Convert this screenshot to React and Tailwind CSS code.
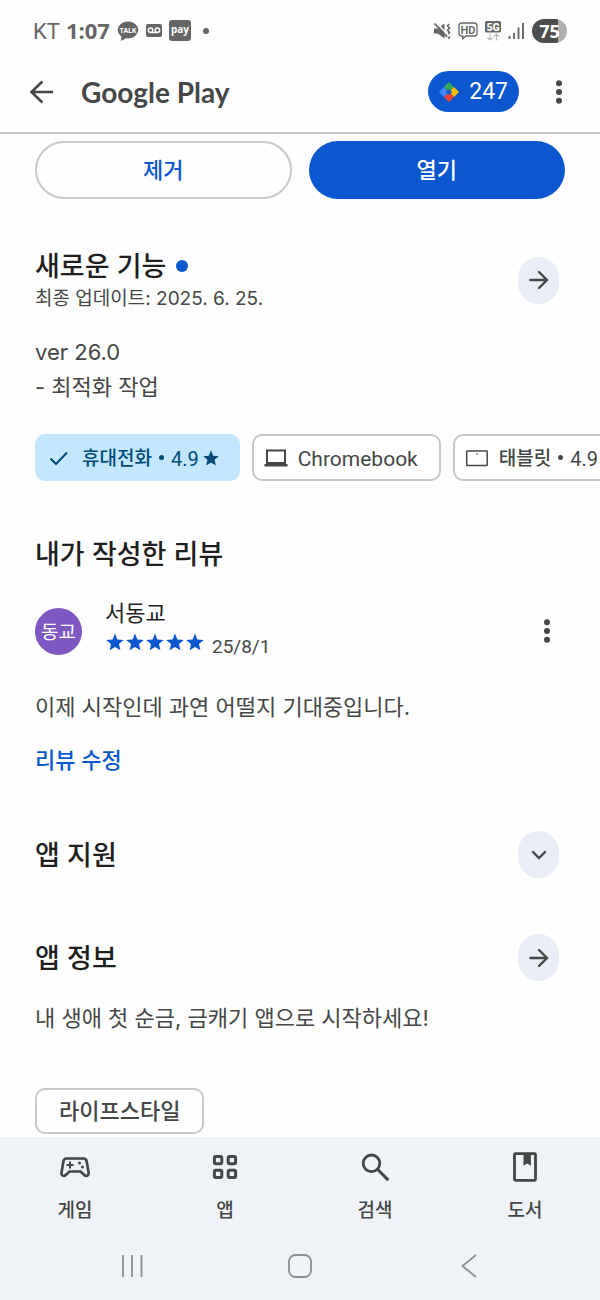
import React from "react";

const FONT = "font-['Inter','Noto_Sans_CJK_KR',sans-serif]";
const FONT_NARROW = "font-['Roboto','Noto_Sans_CJK_KR',sans-serif]";

const STAR_PATH =
  "M12 1.8l2.9 7.1 7.6.6-5.8 4.9 1.8 7.5L12 17.9l-6.5 4 1.8-7.5L1.5 9.5l7.6-.6z";

const Star = ({ className }) => (
  <svg viewBox="0 0 24 24" className={className} fill="currentColor" aria-hidden="true">
    <path d={STAR_PATH} />
  </svg>
);

const MoreIcon = () => (
  <svg viewBox="0 0 8 24" className="h-6 w-2" fill="#444746" aria-hidden="true">
    <circle cx="4" cy="3.2" r="3" />
    <circle cx="4" cy="12" r="3" />
    <circle cx="4" cy="20.8" r="3" />
  </svg>
);

const StatusBar = () => (
  <div className={`flex h-[61px] items-center justify-between pl-[33px] pr-[33px] text-[#666] ${FONT_NARROW}`}>
    <div className="flex items-center">
      <span className="pt-[2px] text-[22px]">KT</span>
      <span className="ml-[6px] font-['Open_Sans',sans-serif] text-[22px] font-bold">1:07</span>
      <svg viewBox="0 0 22 20" className="ml-[7px] h-5 w-[22px]" aria-hidden="true">
        <ellipse cx="11" cy="9" rx="10.3" ry="8.4" fill="#666" />
        <path d="M4.500 15l-.6 5 5.500-3z" fill="#666" />
        <text x="11" y="11.500" textAnchor="middle" fontSize="7" fontWeight="700" fill="#fff" fontFamily="Roboto">
          TALK
        </text>
      </svg>
      <svg viewBox="0 0 16 13" className="ml-[7px] h-[13px] w-4" aria-hidden="true">
        <rect width="16" height="13" rx="2" fill="#666" />
        <g fill="none" stroke="#fff" strokeWidth="1.500">
          <circle cx="4.600" cy="6.300" r="2.200" />
          <circle cx="11.400" cy="6.300" r="2.200" />
          <path d="M4.600 8.500h6.800" />
        </g>
      </svg>
      <span className="ml-[7px] flex h-[21px] w-[22px] items-center justify-center rounded-[3px] bg-[#666] pb-1 font-['Open_Sans',sans-serif] text-[10px] font-bold leading-none text-white">
        pay
      </span>
      <span className="ml-3 h-[6px] w-[6px] rounded-full bg-[#666]" />
    </div>
    <div className="flex items-center">
      <svg viewBox="0 0 18 18" className="h-[18px] w-[18px]" aria-hidden="true">
        <path d="M1 6.500h3.800L11.500 1.500v15l-6.700-5H1z" fill="#666" />
        <path d="M16 2l-1.500 2 2 2-2 2.200 2 2.200-2 2.200 2 2.200-1 2" fill="none" stroke="#666" strokeWidth="1.600" />
        <path d="M3 .5L16.500 14.500" stroke="#fefefe" strokeWidth="1.600" />
        <path d="M1.500 1.500L14 14.800" stroke="#666" strokeWidth="1.800" />
      </svg>
      <svg viewBox="0 0 20 18" className="ml-[7px] h-[18px] w-5" aria-hidden="true">
        <path d="M3.500 1h13a2.500 2.500 0 0 1 2.500 2.500v8a2.500 2.500 0 0 1-2.500 2.500H8l-3.200 2.800V14H3.500A2.500 2.500 0 0 1 1 11.500v-8A2.500 2.500 0 0 1 3.500 1z" fill="none" stroke="#666" strokeWidth="1.300" />
        <text x="10" y="11.500" textAnchor="middle" fontSize="11" fontWeight="600" fill="#666" fontFamily="Roboto">
          HD
        </text>
      </svg>
      <svg viewBox="0 0 18 20" className="ml-[6px] h-5 w-[18px]" aria-hidden="true">
        <rect x="1" width="16" height="11.500" rx="1.500" fill="#666" />
        <text x="9" y="9.500" textAnchor="middle" fontSize="10.500" fontWeight="800" fill="#fff" fontFamily="Roboto">
          5G
        </text>
        <path d="M6 12.500v6.500M3.300 16.500L6 19l2.700-2.500M12.500 19.500v-6.500M9.800 15.500l2.700-2.500 2.700 2.500" fill="none" stroke="#bbb" strokeWidth="1.200" />
      </svg>
      <svg viewBox="0 0 16 17" className="ml-[6px] h-[17px] w-4" stroke="#666" strokeWidth="1.900" aria-hidden="true">
        <path d="M1.500 17v-3M6 17v-6M10.500 17V5.500M15 17V1" />
      </svg>
      <span className="ml-2 flex h-6 w-[35px] items-center justify-center rounded-full bg-linear-to-r from-[#4d4d4d] from-75% to-[#b0b0b0] to-75% font-['Open_Sans',sans-serif] text-[18px] font-bold leading-none text-white">
        75
      </span>
    </div>
  </div>
);

const AppBar = () => (
  <div className="flex h-[71px] items-center pb-[10px] pl-[29px] pr-[37px]">
    <button type="button" aria-label="뒤로" className="flex">
      <svg viewBox="0 0 25 24" className="h-6 w-[25px]" fill="none" stroke="#444746" strokeWidth="2.600" aria-hidden="true">
        <path d="M24 12H3M13.300 1.500L2.500 12l10.800 10.500" />
      </svg>
    </button>
    <h1 className="ml-[27px] font-['Lato',sans-serif] text-[28px] font-bold leading-9 text-[#444746]">
      Google Play
    </h1>
    <button
      type="button"
      className={`ml-auto flex h-[41px] items-center gap-[10px] rounded-full bg-[#0b57d0] px-[11px] text-[23px] text-white ${FONT_NARROW}`}
    >
      <svg viewBox="0 0 20 20" className="h-5 w-5" aria-hidden="true">
        <path d="M10 0L4.900 5.100 10 10l5.100-4.900z" fill="#34a853" />
        <path d="M20 10l-4.900-4.900L10 10l5.100 4.900z" fill="#fbbc04" />
        <path d="M10 20l5.100-5.100L10 10l-5.100 4.900z" fill="#ea4335" />
        <path d="M0 10l4.900 4.900L10 10 4.900 5.100z" fill="#4285f4" />
        <path d="M10 7.500l2.500 2.500-2.500 2.500L7.500 10z" fill="#0b57d0" stroke="#0b57d0" strokeLinejoin="round" />
      </svg>
      <span className="pt-[2px]">247</span>
    </button>
    <button type="button" aria-label="더보기" className="ml-9 flex">
      <MoreIcon />
    </button>
  </div>
);

const RoundButton = ({ label, children }) => (
  <button
    type="button"
    aria-label={label}
    className="mr-[6px] flex h-[47px] w-[41px] shrink-0 items-center justify-center rounded-full bg-[#e9edf6]"
  >
    <svg viewBox="0 0 20 20" className="h-5 w-5" fill="none" stroke="#444746" strokeWidth="2.400" strokeLinecap="round" aria-hidden="true">
      {children}
    </svg>
  </button>
);

const ArrowRight = () => <path d="M1.500 10h16.500M10 2l8 8-8 8" />;

const SectionTitle = ({ children }) => (
  <h2 className="pt-[2px] text-[27px] font-medium leading-9 text-[#1f1f1f]">{children}</h2>
);

const Chip = ({ selected, children }) => (
  <button
    type="button"
    className={`flex h-[47px] shrink-0 items-center whitespace-nowrap rounded-[10px] border-2 pl-[10px] text-[19px] font-medium leading-6 ${
      selected
        ? "border-[#c2e7ff] bg-[#c2e7ff] pr-[18px] text-[#004a77]"
        : "border-[#c7c7c7] bg-white pr-[21px] text-[#444746]"
    }`}
  >
    {children}
  </button>
);

const ChipLabel = ({ children }) => <span className="pt-[2px]">{children}</span>;

const Rating = () => (
  <>
    <span className="mx-[7px] h-[5px] w-[5px] rounded-full bg-current" />
    <span className={`pt-[2px] text-[20px] font-normal ${FONT_NARROW}`}>4.9</span>
    <Star className="ml-[3px] h-[18px] w-[18px]" />
  </>
);

const NAV_ITEMS = [
  {
    label: "게임",
    icon: (
      <>
        <path d="M9.500 9.500h17c1.700 0 2.800 1 3.100 2.600l2 11.400c.3 1.800-.6 3.500-2 3.500-1 0-1.800-.5-2.500-1.200L23.500 22.500h-11L9 25.800c-.7.700-1.500 1.200-2.500 1.200-1.400 0-2.300-1.700-2-3.500l2-11.400c.3-1.600 1.300-2.600 3-2.600z" fill="none" stroke="#444746" strokeWidth="2.700" />
        <path d="M13 12.500v7M9.500 16h7" stroke="#444746" strokeWidth="2" />
        <circle cx="22.500" cy="14" r="1.500" fill="#444746" />
        <circle cx="25.500" cy="18" r="1.500" fill="#444746" />
      </>
    ),
  },
  {
    label: "앱",
    icon: (
      <g fill="none" stroke="#444746" strokeWidth="3">
        <rect x="7.400" y="7.400" width="7.400" height="7.400" rx="1.500" />
        <rect x="21.200" y="7.400" width="7.400" height="7.400" rx="1.500" />
        <rect x="7.400" y="21.200" width="7.400" height="7.400" rx="1.500" />
        <rect x="21.200" y="21.200" width="7.400" height="7.400" rx="1.500" />
      </g>
    ),
  },
  {
    label: "검색",
    icon: (
      <g fill="none" stroke="#444746" strokeWidth="2.800">
        <circle cx="14.500" cy="14.300" r="8.300" />
        <path d="M20.500 20.300l10.800 10.800" strokeWidth="3" />
      </g>
    ),
  },
  {
    label: "도서",
    icon: (
      <>
        <rect x="7.500" y="4.700" width="21" height="26.600" rx="1" fill="none" stroke="#444746" strokeWidth="2.800" />
        <path d="M16.500 5v11.700l3.700-2.200 3.700 2.200V5z" fill="#444746" />
      </>
    ),
  },
];

const BottomNav = () => (
  <footer className="bg-[#eff3f8]">
    <nav className="grid grid-cols-4 pt-3">
      {NAV_ITEMS.map((item) => (
        <a
          key={item.label}
          href="#"
          className="flex flex-col items-center gap-3 text-[19px] font-medium leading-7 text-[#444746]"
        >
          <svg viewBox="0 0 36 36" className="h-9 w-9" aria-hidden="true">
            {item.icon}
          </svg>
          {item.label}
        </a>
      ))}
    </nav>
    <div className="grid grid-cols-3 px-12 pb-[22px] pt-[29px]">
      <button type="button" aria-label="최근 앱" className="flex justify-center">
        <svg viewBox="0 0 24 24" className="h-6 w-6" stroke="#8b8e92" strokeWidth="1.800" aria-hidden="true">
          <path d="M3 1v22M12 1v22M21.500 1v22" />
        </svg>
      </button>
      <button type="button" aria-label="홈" className="flex justify-center">
        <svg viewBox="0 0 24 24" className="h-6 w-6" fill="none" stroke="#8b8e92" strokeWidth="1.800" aria-hidden="true">
          <rect x="1" y="1" width="22" height="22" rx="6.500" />
        </svg>
      </button>
      <button type="button" aria-label="뒤로" className="flex justify-center">
        <svg viewBox="0 0 24 24" className="h-6 w-6" fill="none" stroke="#8b8e92" strokeWidth="1.800" aria-hidden="true">
          <path d="M20 1L6.500 12 20 23" />
        </svg>
      </button>
    </div>
  </footer>
);

export default function App() {
  return (
    <div className={`flex min-h-screen flex-col overflow-x-hidden bg-[#fefefe] ${FONT}`}>
      <header className="border-b-2 border-[#cbcbcb]">
        <StatusBar />
        <AppBar />
      </header>

      <main className="flex-1 px-[35px] pb-[3px] pt-[7px]">
        <div className="grid grid-cols-2 gap-[17px] text-[22px] font-medium">
          <button type="button" className="h-[58px] rounded-full border-2 border-[#c9c9c9] text-[#0b57d0]">
            제거
          </button>
          <button type="button" className="h-[58px] rounded-full bg-[#0b57d0] text-white">
            열기
          </button>
        </div>

        <section>
          <div className="mt-12 flex items-center justify-between">
            <div>
              <div className="flex items-center gap-[10px]">
                <SectionTitle>새로운 기능</SectionTitle>
                <span className="h-3 w-3 rounded-full bg-[#0b57d0]" />
              </div>
              <p className="text-[19px] leading-7 text-[#444746]">최종 업데이트: 2025. 6. 25.</p>
            </div>
            <RoundButton label="새로운 기능 더보기">
              <ArrowRight />
            </RoundButton>
          </div>
          <p className="mt-[22px] text-[22px] leading-[35px] text-[#444746]">
            ver 26.0
            <br />- 최적화 작업
          </p>
        </section>

        <div className="-mr-[35px] mt-[29px] flex gap-3 overflow-hidden">
          <Chip selected>
            <svg viewBox="0 0 24 24" className="mr-[11px] h-6 w-6" fill="none" stroke="currentColor" strokeWidth="2" aria-hidden="true">
              <path d="M3.500 12.500l5.500 5.500L20 6.500" />
            </svg>
            <ChipLabel>휴대전화</ChipLabel>
            <Rating />
          </Chip>
          <Chip>
            <svg viewBox="0 0 24 24" className="mr-[10px] h-6 w-6" aria-hidden="true">
              <rect x="3" y="4.500" width="18" height="12.500" fill="none" stroke="#444746" strokeWidth="2" />
              <path d="M.5 18h23v2.500H.5z" fill="#444746" />
            </svg>
            <span className={`pt-[2px] text-[21px] font-normal ${FONT_NARROW}`}>Chromebook</span>
          </Chip>
          <Chip>
            <svg viewBox="0 0 24 24" className="mr-[10px] h-6 w-6" aria-hidden="true">
              <rect x="1.700" y="5" width="20.500" height="14.500" rx=".5" fill="none" stroke="#444746" strokeWidth="1.500" />
              <circle cx="12" cy="8" r=".8" fill="#444746" />
            </svg>
            <ChipLabel>태블릿</ChipLabel>
            <Rating />
          </Chip>
        </div>

        <section className="mt-[54px]">
          <SectionTitle>내가 작성한 리뷰</SectionTitle>
          <div className="mt-6 flex items-center">
            <span className="flex h-[47px] w-[47px] items-center justify-center rounded-full bg-[#7e57c2] pt-[3px] text-[19px] leading-6 text-white">
              동교
            </span>
            <div className="ml-[23px]">
              <p className="text-[22px] leading-8 text-[#1f1f1f]">서동교</p>
              <div className="flex h-9 text-[#0b57d0]">
                <div className="flex h-[26px] items-center">
                  {[1, 2, 3, 4, 5].map((n) => (
                    <Star key={n} className="h-5 w-5" />
                  ))}
                </div>
                <span className={`ml-[7px] text-[19px] leading-9 text-[#444746] ${FONT_NARROW}`}>25/8/1</span>
              </div>
            </div>
            <button type="button" aria-label="리뷰 메뉴" className="ml-auto mr-[14px] flex">
              <MoreIcon />
            </button>
          </div>
          <p className="mt-[25px] text-[22px] leading-[35px] text-[#444746]">
            이제 시작인데 과연 어떨지 기대중입니다.
          </p>
          <a href="#" className="mt-[19px] block text-[22px] font-medium leading-8 text-[#0b57d0]">
            리뷰 수정
          </a>
        </section>

        <section className="mt-[55px] flex items-center justify-between">
          <SectionTitle>앱 지원</SectionTitle>
          <RoundButton label="앱 지원 펼치기">
            <path d="M4 7l6 6 6-6" />
          </RoundButton>
        </section>

        <section className="mt-14">
          <div className="flex items-center justify-between">
            <SectionTitle>앱 정보</SectionTitle>
            <RoundButton label="앱 정보 더보기">
              <ArrowRight />
            </RoundButton>
          </div>
          <p className="mt-5 text-[22px] leading-[35px] text-[#444746]">
            내 생애 첫 순금, 금캐기 앱으로 시작하세요!
          </p>
          <button
            type="button"
            className="mt-[52px] flex h-[46px] items-center rounded-[10px] border-2 border-[#c9c9c9] px-[22px] text-[22px] font-medium text-[#444746]"
          >
            라이프스타일
          </button>
        </section>
      </main>

      <BottomNav />
    </div>
  );
}
